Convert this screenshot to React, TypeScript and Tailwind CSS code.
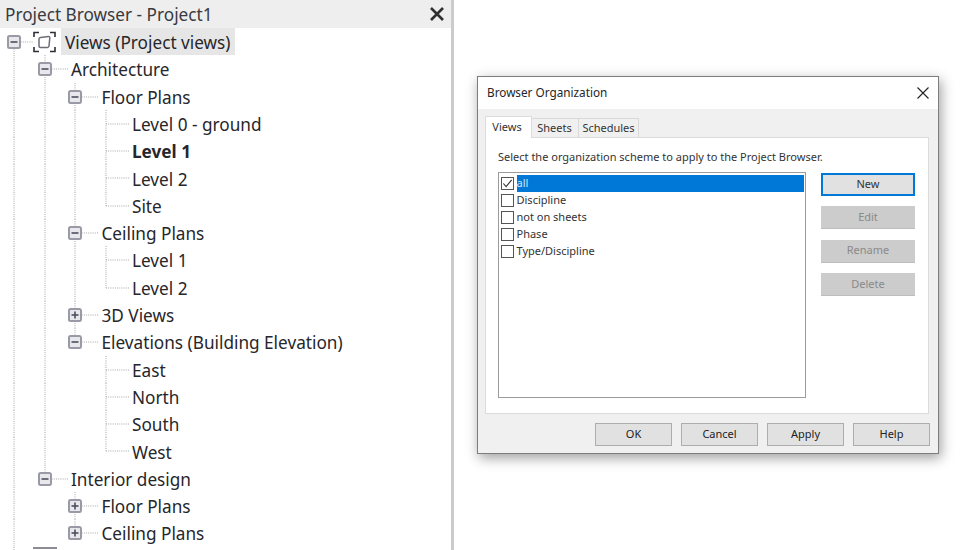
type TreeNode = { label: string; bold?: boolean; open?: boolean; items?: TreeNode[] };

const level = (label: string, bold?: boolean): TreeNode => ({ label, bold });

const projectViews: TreeNode[] = [
  {
    label: "Architecture",
    open: true,
    items: [
      { label: "Floor Plans", open: true, items: [level("Level 0 - ground"), level("Level 1", true), level("Level 2"), level("Site")] },
      { label: "Ceiling Plans", open: true, items: [level("Level 1"), level("Level 2")] },
      { label: "3D Views", open: false, items: [] },
      { label: "Elevations (Building Elevation)", open: true, items: [level("East"), level("North"), level("South"), level("West")] },
    ],
  },
  {
    label: "Interior design",
    open: true,
    items: [
      { label: "Floor Plans", open: false, items: [] },
      { label: "Ceiling Plans", open: false, items: [] },
    ],
  },
];

function Expander({ open, x, y }: { open: boolean; x: number; y: number }) {
  return (
    <g>
      <rect x={x - 6} y={y - 6} width="12" height="12" rx="1.5" fill="#e8e8ec" stroke="#9a9aa6" strokeWidth="2" />
      <path d={`M${x - 3.5} ${y}H${x + 3.5}`} stroke="#4d4d60" strokeWidth="1.6" />
      {!open && <path d={`M${x} ${y - 3.5}V${y + 3.5}`} stroke="#4d4d60" strokeWidth="1.6" />}
    </g>
  );
}

// one indent step: ancestor line running through the row
function GuideCell({ on }: { on: boolean }) {
  return (
    <svg className="h-[27.3px] w-[30.5px] shrink-0" viewBox="0 0 30.5 27.3">
      {on && <path d="M14 0V27.3" stroke="#a8a8a8" strokeDasharray="1 1.2" />}
    </svg>
  );
}

// own cell of a node: elbow, plus the expander where the node has children
function NodeCell({ node, last }: { node: TreeNode; last: boolean }) {
  const hasBox = node.items !== undefined;
  return (
    <svg className="h-[27.3px] w-[38.5px] shrink-0" viewBox="0 0 38.5 27.3">
      <path d={last ? "M14 0V14" : "M14 0V27.3"} stroke="#a8a8a8" strokeDasharray="1 1.2" />
      <path d="M14 14H37" stroke="#a8a8a8" strokeDasharray="1 1.2" />
      {hasBox && <Expander open={!!node.open} x={14} y={14} />}
    </svg>
  );
}

function Branch({ nodes, guides }: { nodes: TreeNode[]; guides: boolean[] }) {
  return (
    <>
      {nodes.map((node, i) => {
        const last = i === nodes.length - 1;
        return (
          <div key={node.label + i}>
            <div className="flex h-[27.3px] items-center">
              {guides.map((on, g) => (
                <GuideCell key={g} on={on} />
              ))}
              <NodeCell node={node} last={last} />
              <span className={`ml-[2px] mt-[2px] whitespace-nowrap text-[17.2px] leading-none text-[#26262b] ${node.bold ? "font-bold" : ""}`}>
                {node.label}
              </span>
            </div>
            {node.open && node.items && <Branch nodes={node.items} guides={[...guides, !last]} />}
          </div>
        );
      })}
    </>
  );
}

function ViewsIcon() {
  return (
    <svg className="h-[22px] w-[23px] shrink-0" viewBox="0 0 23 22" fill="none">
      <path d="M1 6V1.5H6M17 1.5H22V6M1 16V20.5H6M17 20.5H22V16" stroke="#2e2e36" strokeWidth="1.6" />
      <path d="M7.5 6.5L15.5 5.5Q17 5.5 16.8 7L16 15Q15.8 16.5 14.5 16.5H7.5Q6 16.5 6 15V8Q6 6.7 7.5 6.5Z" stroke="#6d6d78" strokeWidth="1.5" />
    </svg>
  );
}

function ProjectBrowser() {
  return (
    <div className="flex h-full w-[454px] shrink-0 flex-col overflow-hidden border-r-[3px] border-[#cbcbcb] bg-white">
      <div className="flex h-[28px] shrink-0 items-center justify-between bg-[#eeeeee] pl-[5px] pr-[7px]">
        <span className="mt-[2px] text-[17.2px] leading-none text-[#3a3a3f]">Project Browser - Project1</span>
        <svg className="h-[14px] w-[14px]" viewBox="0 0 14 14">
          <path d="M1 1L13 13M13 1L1 13" stroke="#2f2f2f" strokeWidth="2.6" />
        </svg>
      </div>
      <div className="flex h-[27.3px] items-center">
        <svg className="h-[27.3px] w-[33px] shrink-0" viewBox="0 0 33 27.3">
          <path d="M14 14V27.3M14 14H33" stroke="#a8a8a8" strokeDasharray="1 1.2" />
          <Expander open x={14} y={14} />
        </svg>
        <ViewsIcon />
        <span className="ml-[5px] flex h-full items-center whitespace-nowrap bg-[#e6e6e6] pl-[4px] pr-[5px] pt-[2px] text-[17.2px] leading-none text-[#26262b]">
          Views (Project views)
        </span>
      </div>
      <Branch nodes={projectViews} guides={[true]} />
      <div className="flex h-[27.3px] shrink-0">
        <GuideCell on />
        <div className="ml-[2px] h-[2px] w-[24px] bg-[#8c8c94]" />
      </div>
    </div>
  );
}

function SideButton({ label }: { label: string }) {
  return (
    <div className="flex h-[23px] w-[94px] items-center justify-center border-b border-[#bdbdbd] bg-[#cccccc] text-[11px] text-[#8a8a8a]">
      {label}
    </div>
  );
}

function FooterButton({ label }: { label: string }) {
  return (
    <div className="flex h-[23px] w-[77px] items-center justify-center border border-[#adadad] bg-[#e1e1e1] text-[11px] text-[#222222]">
      {label}
    </div>
  );
}

const schemes = ["all", "Discipline", "not on sheets", "Phase", "Type/Discipline"];

function BrowserOrganization() {
  return (
    <div className="flex h-[378px] w-[462px] flex-col border border-[#7d7d7d] bg-[#f0f0f0] shadow-[2px_4px_12px_rgba(0,0,0,0.38)]">
      <div className="flex h-[32px] shrink-0 items-center justify-between bg-white pl-[9px] pr-[9px]">
        <span className="text-[11.75px] text-[#262626]">Browser Organization</span>
        <svg className="h-[12px] w-[12px]" viewBox="0 0 12 12">
          <path d="M.5.5L11.5 11.5M11.5.5L.5 11.5" stroke="#222222" strokeWidth="1.1" />
        </svg>
      </div>
      <div className="flex h-[28px] shrink-0 items-end pl-[7px]">
        <div className="z-10 mb-[-1px] flex h-[22px] w-[47px] items-center justify-center border border-b-0 border-[#dcdcdc] bg-white pr-[3px] text-[11px] text-[#333333]">
          Views
        </div>
        <div className="flex h-[19px] w-[47px] items-center justify-center border border-b-0 border-l-0 border-[#d9d9d9] bg-[#f0f0f0] pr-[1px] text-[11px] text-[#333333]">
          Sheets
        </div>
        <div className="flex h-[19px] w-[60px] items-center justify-center border border-b-0 border-l-0 border-[#d9d9d9] bg-[#f0f0f0] text-[11px] text-[#333333]">
          Schedules
        </div>
      </div>
      <div className="ml-[7px] mr-[9px] flex h-[277px] flex-col border border-[#dcdcdc] bg-white pl-[12px] pr-[13px] pt-[11px]">
        <p className="h-[23px] whitespace-nowrap text-[11px] leading-[16px] text-[#333333]">
          Select the organization scheme to apply to the Project Browser.
        </p>
        <div className="flex items-start justify-between">
          <div className="h-[226px] w-[308px] border-[1.5px] border-[#9b9b9b] bg-white px-px pt-[2px]">
            {schemes.map((scheme, i) => (
              <div key={scheme} className="flex h-[17px] items-center pl-[1px]">
                <span className="flex h-[13px] w-[13px] shrink-0 items-center justify-center border border-[#555555] bg-white">
                  {i === 0 && (
                    <svg className="h-[11px] w-[11px]" viewBox="0 0 12 12" fill="none">
                      <path d="M1.5 6L4.5 9.5L10.5 2" stroke="#333333" strokeWidth="1.2" />
                    </svg>
                  )}
                </span>
                <span
                  className={`ml-[2.5px] flex h-full flex-1 items-center text-[11px] ${
                    i === 0 ? "bg-[#0078d7] text-[#cfe6fa]" : "text-[#333333]"
                  }`}
                >
                  {scheme}
                </span>
              </div>
            ))}
          </div>
          <div className="mt-[1px] flex flex-col gap-[10.3px]">
            <div className="flex h-[23px] w-[94px] items-center justify-center border-2 border-[#0078d7] bg-[#e1e1e1] text-[11px] text-[#333333]">
              New
            </div>
            <SideButton label="Edit" />
            <SideButton label="Rename" />
            <SideButton label="Delete" />
          </div>
        </div>
      </div>
      <div className="flex justify-end gap-[9px] pr-[8px] pt-[9px]">
        <FooterButton label="OK" />
        <FooterButton label="Cancel" />
        <FooterButton label="Apply" />
        <FooterButton label="Help" />
      </div>
    </div>
  );
}

export default function App() {
  return (
    <div className="flex h-[550px] w-[960px] overflow-hidden bg-white font-['Noto_Sans',sans-serif]">
      <ProjectBrowser />
      <div className="pl-[23px] pt-[76px]">
        <BrowserOrganization />
      </div>
    </div>
  );
}
